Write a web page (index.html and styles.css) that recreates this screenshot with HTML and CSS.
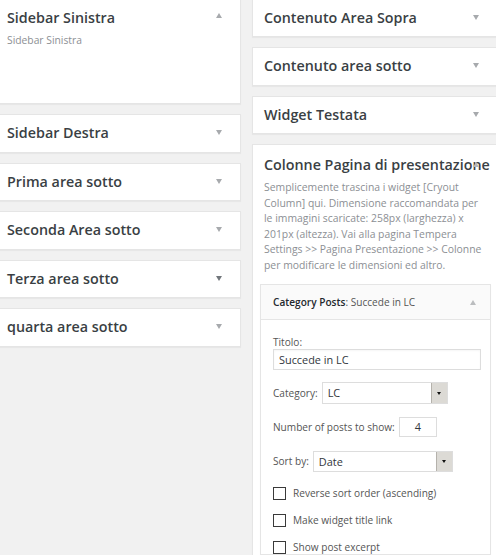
FILE: index.html
```html
<!DOCTYPE html>
<html lang="it">
<head>
<meta charset="utf-8">
<title>Widget</title>
<link rel="stylesheet" href="styles.css">
</head>
<body>
<div class="wrap">
  <div class="col">
    <div class="box tall">
      <h2>Sidebar Sinistra</h2>
      <span class="toggle up"></span>
      <p class="sdesc">Sidebar Sinistra</p>
    </div>
    <div class="box"><h2>Sidebar Destra</h2><span class="toggle"></span></div>
    <div class="box"><h2>Prima area sotto</h2><span class="toggle"></span></div>
    <div class="box"><h2>Seconda Area sotto</h2><span class="toggle"></span></div>
    <div class="box"><h2>Terza area sotto</h2><span class="toggle dark"></span></div>
    <div class="box"><h2>quarta area sotto</h2><span class="toggle"></span></div>
  </div>
  <div class="col">
    <div class="box"><h2>Contenuto Area Sopra</h2><span class="toggle"></span></div>
    <div class="box"><h2>Contenuto area sotto</h2><span class="toggle"></span></div>
    <div class="box"><h2>Widget Testata</h2><span class="toggle"></span></div>
    <div class="box open">
      <h2>Colonne Pagina di presentazione</h2>
      <span class="toggle up"></span>
      <p class="desc">Semplicemente trascina i widget [Cryout<br>Column] qui. Dimensione raccomandata per<br>le immagini scaricate: 258px (larghezza) x<br>201px (altezza). Vai alla pagina Tempera<br>Settings &gt;&gt; Pagina Presentazione &gt;&gt; Colonne<br>per modificare le dimensioni ed altro.</p>
      <div class="widget">
        <div class="whead">
          <h3><strong>Category Posts</strong>: Succede in LC</h3>
          <span class="toggle up small"></span>
        </div>
        <div class="wbody">
          <label class="lbl">Titolo:</label>
          <div class="txt">Succede in LC</div>
          <div class="row r-cat">
            <span class="lbl">Category:</span>
            <div class="sel w-cat"><span>LC</span><span class="btn"></span></div>
          </div>
          <div class="row r-num">
            <span class="lbl">Number of posts to show:</span>
            <div class="num">4</div>
          </div>
          <div class="row r-sort">
            <span class="lbl">Sort by:</span>
            <div class="sel w-sort"><span>Date</span><span class="btn"></span></div>
          </div>
          <div class="row r-chk first"><span class="chk"></span><span class="lbl">Reverse sort order (ascending)</span></div>
          <div class="row r-chk"><span class="chk"></span><span class="lbl">Make widget title link</span></div>
          <div class="row r-chk"><span class="chk"></span><span class="lbl">Show post excerpt</span></div>
        </div>
      </div>
    </div>
  </div>
</div>
</body>
</html>
```

FILE: styles.css
```css
html, body {
  margin: 0;
  padding: 0;
  background: #f1f1f1;
  overflow: hidden;
}
body {
  font-family: "Open Sans", "DejaVu Sans", sans-serif;
  color: #444;
  width: 496px;
  height: 555px;
}
.wrap {
  display: flex;
  gap: 11px;
  margin-left: -5px;
  margin-top: -1.5px;
}
.col {
  flex: none;
  width: 246px;
  display: flex;
  flex-direction: column;
  gap: 10px;
}
.box {
  position: relative;
  background: #fff;
  border: 1px solid #e5e5e5;
  box-shadow: 0 1px 1px rgba(0, 0, 0, 0.04);
  box-sizing: border-box;
}
.box h2 {
  margin: 0;
  padding: 0 11px;
  font-size: 14.3px;
  font-weight: 600;
  line-height: 36.5px;
  color: #3a3f44;
  white-space: nowrap;
}
.box.tall {
  height: 105.5px;
}
.sdesc {
  margin: -3px 11px 0;
  font-size: 10.3px;
  line-height: 15px;
  color: #8c8f94;
}
.toggle {
  position: absolute;
  right: 18px;
  top: 15px;
  width: 0;
  height: 0;
  border-left: 3px solid transparent;
  border-right: 3px solid transparent;
  border-top: 5px solid #a7aaad;
}
.toggle.dark {
  border-top-color: #72777c;
}
.toggle.up {
  top: 13px;
  border-top: 0;
  border-bottom: 5px solid #a7aaad;
}
.box.open h2 {
  line-height: 20px;
  padding-top: 10px;
}
.box.open > .toggle.up {
  top: 17px;
  border-bottom-color: #b5b8bb;
}
.desc {
  margin: 5px 11px 0;
  font-size: 10.4px;
  line-height: 15.6px;
  color: #8c8f94;
  white-space: nowrap;
}
.widget {
  margin: 10px 6px 0 7px;
  border: 1px solid #e5e5e5;
  background: #fff;
  box-shadow: 0 1px 1px rgba(0, 0, 0, 0.04);
}
.whead {
  position: relative;
  background: #fafafa;
  border-bottom: 1px solid #e5e5e5;
  height: 34px;
  display: flex;
  align-items: center;
  padding: 0 12px;
}
.whead h3 {
  margin: 0;
  font-size: 10.1px;
  font-weight: 400;
  color: #555;
  white-space: nowrap;
}
.whead strong {
  font-weight: 600;
  color: #23282d;
}
.whead .toggle.up {
  top: 15px;
  right: 14px;
  border-bottom-color: #bbbdbf;
}
.wbody {
  padding: 15px 12px 0;
  display: flex;
  flex-direction: column;
  align-items: flex-start;
}
.lbl {
  font-size: 10.1px;
  line-height: 14px;
  color: #555;
  white-space: nowrap;
}
.txt {
  box-sizing: border-box;
  width: 208px;
  height: 21px;
  border: 1px solid #ddd;
  box-shadow: inset 0 1px 2px rgba(0, 0, 0, 0.04);
  font-size: 10.9px;
  line-height: 19px;
  padding: 0 5px;
  color: #32373c;
}
.row {
  display: flex;
  align-items: center;
  gap: 4px;
}
.r-cat { margin-top: 12px; height: 22px; }
.r-num { margin-top: 13px; height: 20px; }
.r-sort { margin-top: 14px; height: 21px; }
.r-chk { gap: 7px; height: 13px; margin-top: 14px; }
.r-chk.first { margin-top: 15px; }
.sel {
  box-sizing: border-box;
  display: flex;
  align-items: stretch;
  justify-content: space-between;
  border: 1px solid #ddd;
  background: #fff;
  font-size: 10.9px;
  color: #32373c;
}
.sel span:first-child {
  padding-left: 5px;
  display: flex;
  align-items: center;
}
.w-cat { width: 126px; height: 22px; }
.w-sort { width: 140px; height: 21px; }
.sel .btn {
  width: 15px;
  background: #dcdad5;
  border-left: 1px solid #b5b2ac;
  position: relative;
}
.sel .btn::after {
  content: "";
  position: absolute;
  left: 5px;
  top: 50%;
  margin-top: -1px;
  border-left: 2.5px solid transparent;
  border-right: 2.5px solid transparent;
  border-top: 3px solid #111;
}
.num {
  box-sizing: border-box;
  width: 38px;
  height: 20px;
  border: 1px solid #ddd;
  font-size: 10.9px;
  line-height: 18px;
  text-align: center;
  color: #32373c;
}
.chk {
  box-sizing: border-box;
  width: 13px;
  height: 13px;
  border: 1px solid #3a3a3a;
  background: #fff;
  flex: none;
}
```
